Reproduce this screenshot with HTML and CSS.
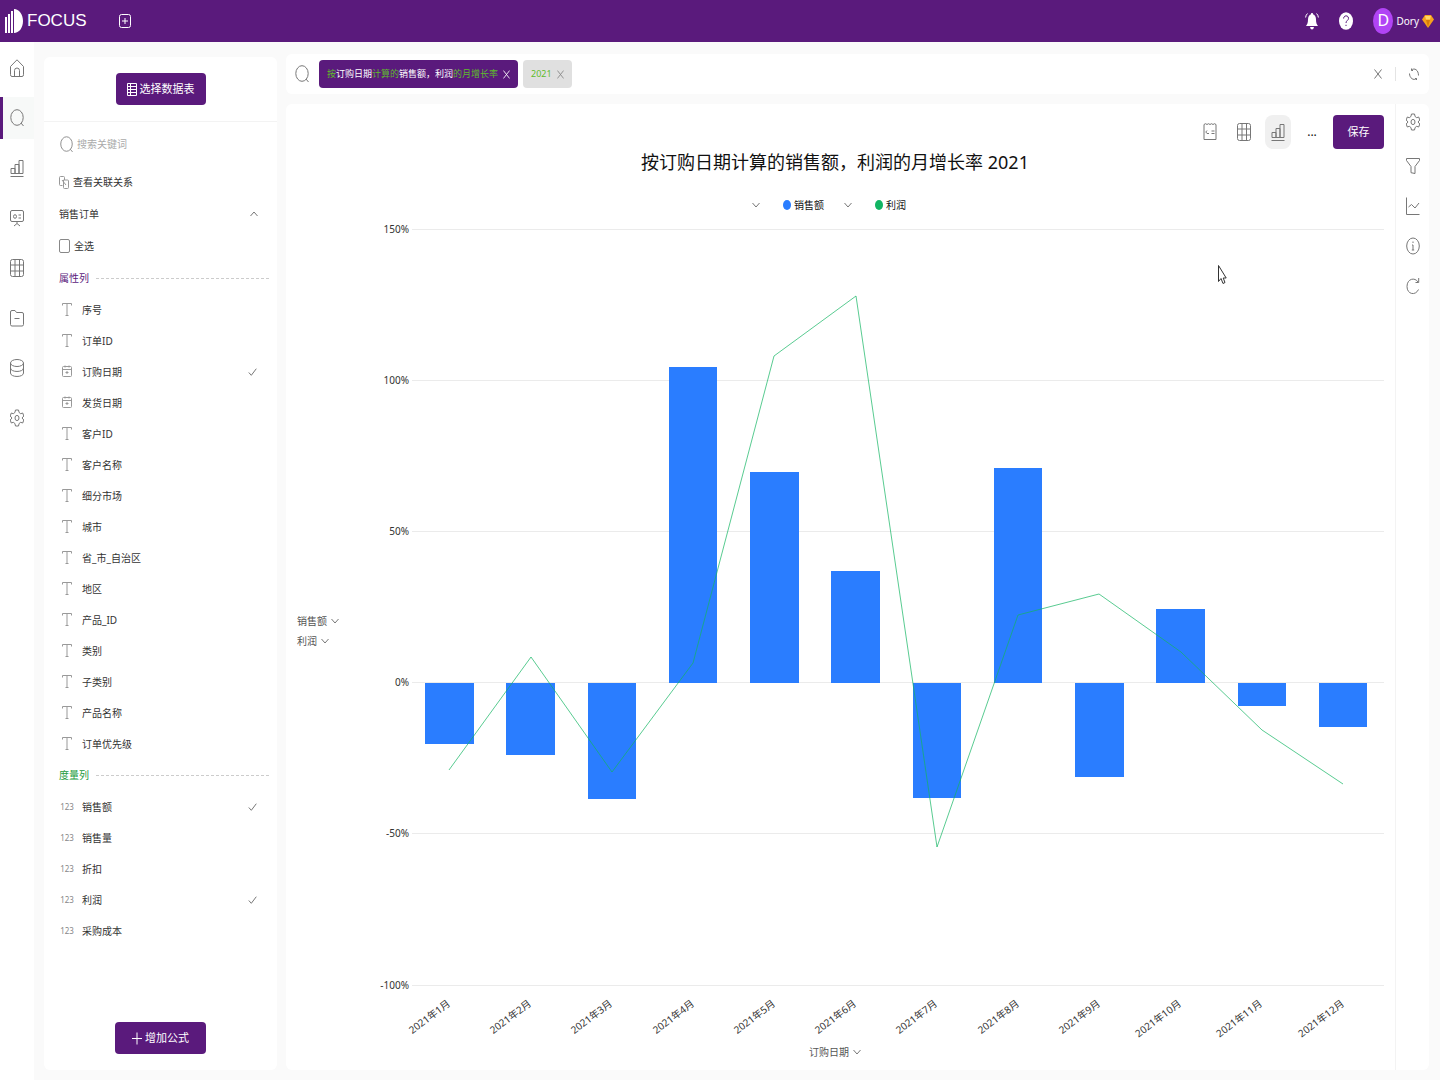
FILE: index.html
```html
<!DOCTYPE html>
<html lang="zh-CN">
<head>
<meta charset="utf-8">
<title>FOCUS</title>
<link rel="stylesheet" href="styles.css">
</head>
<body>
<svg class="sprite" aria-hidden="true">
  <symbol id="i-search" viewBox="0 0 14 18"><ellipse cx="7" cy="8.500" rx="6.200" ry="7.800"/><path d="M11 14l2.500 3"/></symbol>
  <symbol id="i-home" viewBox="0 0 14 18"><path d="M.5 7.500L7 .8l6.500 6.700v8.200q0 1.800-1.500 1.800H2q-1.500 0-1.500-1.800zM4.500 17.500v-6q0-2.500 2.500-2.500t2.500 2.500v6"/></symbol>
  <symbol id="i-bars" viewBox="0 0 14 18"><path d="M.5 17.500h13M1 14.500V9.500h4v5M5 14.500V5.500h4v9M9 14.500v-13h4v13M1 14.500h12"/></symbol>
  <symbol id="i-board" viewBox="0 0 14 18"><path d="M2 1.500h10q1.500 0 1.500 1.500v8q0 1.500-1.500 1.500H2Q.5 12.500.5 11V3Q.5 1.500 2 1.500zM7 12.500v2M4 17l3-2.500L10 17M8.500 6H11M8.500 9H11"/><ellipse cx="5" cy="7.500" rx="1.500" ry="1.800"/></symbol>
  <symbol id="i-grid" viewBox="0 0 14 18"><rect x=".5" y=".5" width="13" height="17" rx="2"/><path d="M.5 6h13M.5 12h13M5 .5v17M9.500.5v17"/></symbol>
  <symbol id="i-folder" viewBox="0 0 14 18"><path d="M.5 3Q.5 1.500 2 1.500h3L6.500 3.500H12q1.500 0 1.500 1.500v10.500q0 1.500-1.500 1.500H2Q.5 17 .5 15.500zM4.500 9.500h5"/></symbol>
  <symbol id="i-db" viewBox="0 0 14 18"><ellipse cx="7" cy="4" rx="6.500" ry="3.500"/><path d="M.5 4v10c0 4.600 13 4.600 13 0V4M.5 9c0 4.600 13 4.600 13 0"/></symbol>
  <symbol id="i-gear" viewBox="0 0 14 18"><path d="M5.500 1h3l.6 2.500 1.600 1.200 2-.7 1.100 3L12 9l1.800 2-1.100 3-2-.7-1.600 1.200L8.500 17h-3l-.6-2.500-1.600-1.200-2 .7-1.100-3L2 9 .2 7l1.100-3 2 .7 1.600-1.200z"/><ellipse cx="7" cy="9" rx="2" ry="2.600"/></symbol>
  <symbol id="i-text" viewBox="0 0 10 13"><path d="M.5 2.500V.5h9v2M5 .5v12M3.500 12.500h3"/></symbol>
  <symbol id="i-date" viewBox="0 0 10 13"><rect x=".5" y="1.500" width="9" height="10" rx="1"/><path d="M.5 4.500h9M3 .5v2M7 .5v2M3.500 7.500h3M5 6v3"/></symbol>
  <symbol id="i-link" viewBox="0 0 10 13"><path d="M3.500 9.500h-2q-1 0-1-1v-7q0-1 1-1h3q1 0 1 1V4M4.500 4H8.500q1 0 1 1v6.500q0 1-1 1h-3q-1 0-1-1zM3 4l4 5"/></symbol>
  <symbol id="i-up" viewBox="0 0 8 6"><path d="M.5 5L4 1l3.500 4"/></symbol>
  <symbol id="i-down" viewBox="0 0 8 6"><path d="M.5 1L4 5l3.500-4"/></symbol>
  <symbol id="i-check" viewBox="0 0 9 8"><path d="M.8 4.500l2.500 2.800L8.300.7"/></symbol>
  <symbol id="i-x" viewBox="0 0 8 10"><path d="M.5.5l7 9M7.500.5l-7 9"/></symbol>
  <symbol id="i-refresh" viewBox="0 0 10 13"><path d="M9.500 7.500C9.500 2 5.500-.5 2.500 2M.5 5.500c0 4.500 4 7.500 7 5M2.500.5V2.500H4M7.500 12v-1.500H6"/></symbol>
  <symbol id="i-filter" viewBox="0 0 14 18"><path d="M.5 1.500h13v2L9 9.500v7l-4-.8V9.500L.5 3.500z"/></symbol>
  <symbol id="i-trend" viewBox="0 0 14 18"><path d="M.5.5v17h13M2.500 10l3-2.500L9 11l4-5"/></symbol>
  <symbol id="i-info" viewBox="0 0 14 18"><ellipse cx="7" cy="9" rx="6.300" ry="8"/><path d="M7 8v5M6 8h1M5.800 13h2.400M7 4.500v1.500"/></symbol>
  <symbol id="i-redo" viewBox="0 0 14 18"><path d="M12.500 12.500C9.500 19 1 17.500 1 9.500 1 1.500 9 0 12 5M12.700 1v4.500H9.500"/></symbol>
  <symbol id="i-summary" viewBox="0 0 14 18"><path d="M1 1.500l1.500-.8L4 1.500l1.500-.8L7 1.500l1.500-.8 1.500.8 1.500-.8 1.500.8v15H1zM4 7.500L2.800 9 4 10.500h2M8.500 8h3M8.500 10.500h3"/></symbol>
</svg>

<header class="topbar">
  <a class="brand" href="#">
    <svg width="18" height="26" viewBox="0 0 18 26" aria-hidden="true"><path fill="#fff" d="M0 9h2v16H0zM3 6h2v19H3zM6 3h2v22H6zM9 1c5 0 9 5 9 12s-4 12-9 12z"/></svg>
    <span>FOCUS</span>
  </a>
  <button class="icon-btn new-tab" aria-label="新建"><svg width="12" height="14" viewBox="0 0 12 14"><rect x=".5" y=".5" width="11" height="13" rx="2"/><path d="M6 4v6M3 7h6"/></svg></button>
  <div class="account">
    <button class="icon-btn" aria-label="通知"><svg width="14" height="18" viewBox="0 0 14 18"><path fill="#fff" stroke="none" d="M7 1c.8 0 1 .6 1 1.200 2 .6 3 2.800 3 5.300 0 3.500.8 5 2 6.500H1c1.200-1.500 2-3 2-6.500 0-2.500 1-4.700 3-5.300C6 1.600 6.200 1 7 1zM5 15h4q-.5 2.500-2 2.500T5 15z"/><path d="M2.500 1.500Q.8 3 .6 5.500M11.500 1.500q1.700 1.500 1.900 4"/></svg></button>
    <button class="icon-btn" aria-label="帮助"><svg width="14" height="18" viewBox="0 0 14 18"><ellipse cx="7" cy="9" rx="7" ry="8.800" fill="#fff" stroke="none"/><path class="mark" d="M4.600 6.500C4.600 3 9.500 3 9.500 6.300 9.500 8.500 7 8.500 7 11M7 12.800v1.200"/></svg></button>
    <button class="user"><span class="avatar">D</span><span>Dory</span><svg width="12" height="13" viewBox="0 0 12 13" aria-hidden="true"><path fill="#f6a21c" d="M3 0h6l3 4.500L6 13 0 4.500z"/><path fill="#ffd566" d="M3 1h6L8 4.500H4z"/><path fill="#d97b0a" d="M4 5h4L6 12z"/></svg></button>
  </div>
</header>

<div class="shell">
  <nav class="rail">
    <a href="#" aria-label="首页"><svg class="ic"><use href="#i-home"/></svg></a>
    <a href="#" class="active" aria-label="搜索"><svg class="ic"><use href="#i-search"/></svg></a>
    <a href="#" aria-label="图表"><svg class="ic"><use href="#i-bars"/></svg></a>
    <a href="#" aria-label="看板"><svg class="ic"><use href="#i-board"/></svg></a>
    <a href="#" aria-label="数据表"><svg class="ic"><use href="#i-grid"/></svg></a>
    <a href="#" aria-label="资源"><svg class="ic"><use href="#i-folder"/></svg></a>
    <a href="#" aria-label="数据源"><svg class="ic"><use href="#i-db"/></svg></a>
    <a href="#" aria-label="设置"><svg class="ic"><use href="#i-gear"/></svg></a>
  </nav>

  <aside class="fields">
    <div class="fields-head">
      <button class="primary"><svg width="10" height="13" viewBox="0 0 10 13"><path d="M.5.5h9v12h-9zM.5 3.500h9M.5 6.500h9M.5 9.500h9M3.500.5v12"/></svg>选择数据表</button>
    </div>
    <label class="find"><svg width="13" height="17"><use href="#i-search"/></svg><input type="text" placeholder="搜索关键词"></label>
    <a class="row link" href="#"><svg class="sm"><use href="#i-link"/></svg>查看关联关系</a>
    <button class="row group">销售订单<svg width="8" height="6"><use href="#i-up"/></svg></button>
    <label class="row all"><input type="checkbox">全选</label>

    <h2 class="row section attr">属性列</h2>
    <ul>
      <li><svg class="sm"><use href="#i-text"/></svg>序号</li>
      <li><svg class="sm"><use href="#i-text"/></svg>订单ID</li>
      <li><svg class="sm"><use href="#i-date"/></svg>订购日期<svg class="tick"><use href="#i-check"/></svg></li>
      <li><svg class="sm"><use href="#i-date"/></svg>发货日期</li>
      <li><svg class="sm"><use href="#i-text"/></svg>客户ID</li>
      <li><svg class="sm"><use href="#i-text"/></svg>客户名称</li>
      <li><svg class="sm"><use href="#i-text"/></svg>细分市场</li>
      <li><svg class="sm"><use href="#i-text"/></svg>城市</li>
      <li><svg class="sm"><use href="#i-text"/></svg>省_市_自治区</li>
      <li><svg class="sm"><use href="#i-text"/></svg>地区</li>
      <li><svg class="sm"><use href="#i-text"/></svg>产品_ID</li>
      <li><svg class="sm"><use href="#i-text"/></svg>类别</li>
      <li><svg class="sm"><use href="#i-text"/></svg>子类别</li>
      <li><svg class="sm"><use href="#i-text"/></svg>产品名称</li>
      <li><svg class="sm"><use href="#i-text"/></svg>订单优先级</li>
    </ul>
    <h2 class="row section measure">度量列</h2>
    <ul>
      <li><span class="num">123</span>销售额<svg class="tick"><use href="#i-check"/></svg></li>
      <li><span class="num">123</span>销售量</li>
      <li><span class="num">123</span>折扣</li>
      <li><span class="num">123</span>利润<svg class="tick"><use href="#i-check"/></svg></li>
      <li><span class="num">123</span>采购成本</li>
    </ul>
    <div class="fields-foot">
      <button class="primary"><svg width="10" height="13" viewBox="0 0 10 13"><path d="M5 .5v12M0 6.500h10"/></svg>增加公式</button>
    </div>
  </aside>

  <main class="work">
    <div class="query">
      <svg class="ic"><use href="#i-search"/></svg>
      <button class="chip on"><span><em>按</em>订购日期<em>计算的</em>销售额，利润<em>的月增长率</em></span><svg width="7" height="9"><use href="#i-x"/></svg></button>
      <button class="chip"><span>2021</span><svg width="7" height="9"><use href="#i-x"/></svg></button>
      <input type="text" aria-label="搜索内容">
      <button class="icon-btn" aria-label="清空"><svg width="8" height="10"><use href="#i-x"/></svg></button>
      <span class="bar"></span>
      <button class="icon-btn" aria-label="刷新"><svg width="10" height="13"><use href="#i-refresh"/></svg></button>
    </div>

    <section class="result">
      <div class="view">
        <div class="tools">
          <button class="tool" aria-label="摘要"><svg class="ic"><use href="#i-summary"/></svg></button>
          <button class="tool" aria-label="表格"><svg class="ic"><use href="#i-grid"/></svg></button>
          <button class="tool picked" aria-label="图形"><svg class="ic"><use href="#i-bars"/></svg></button>
          <button class="tool">...</button>
          <button class="primary save">保存</button>
        </div>
        <h1>按订购日期计算的销售额，利润的月增长率 2021</h1>
        <div class="legend">
          <span class="key sales"><svg width="8" height="6"><use href="#i-down"/></svg><i></i>销售额</span>
          <span class="key profit"><svg width="8" height="6"><use href="#i-down"/></svg><i></i>利润</span>
        </div>
        <div class="plot">
          <div class="measures">
            <button>销售额<svg width="8" height="6"><use href="#i-down"/></svg></button>
            <button>利润<svg width="8" height="6"><use href="#i-down"/></svg></button>
          </div>
          <svg class="chart" viewBox="346 214 1038 829" role="img" aria-label="月增长率">
            <path class="gridlines" d="M412 229.500h972M412 380.500h972M412 531.500h972M412 682.500h972M412 833.500h972M412 985.500h972"/>
            <g class="ylabels">
              <text x="409" y="233">150%</text><text x="409" y="384">100%</text><text x="409" y="535">50%</text>
              <text x="409" y="686">0%</text><text x="409" y="837">-50%</text><text x="409" y="989">-100%</text>
            </g>
            <g class="columns">
              <rect x="425" y="683" width="49" height="61"/><rect x="506" y="683" width="49" height="72"/>
              <rect x="588" y="683" width="48" height="116"/><rect x="669" y="367" width="48" height="316"/>
              <rect x="750" y="472" width="49" height="211"/><rect x="831" y="571" width="49" height="112"/>
              <rect x="913" y="683" width="48" height="115"/><rect x="994" y="468" width="48" height="215"/>
              <rect x="1075" y="683" width="49" height="94"/><rect x="1156" y="609" width="49" height="74"/>
              <rect x="1238" y="683" width="48" height="23"/><rect x="1319" y="683" width="48" height="44"/>
            </g>
            <polyline class="line" points="449,770 531,657 612,772 693,663 774,356 856,296 937,847 1018,615 1099,594 1181,652 1262,730 1343,784"/>
            <g class="xlabels">
              <text transform="translate(451 1005) rotate(-37)">2021年1月</text>
              <text transform="translate(532 1005) rotate(-37)">2021年2月</text>
              <text transform="translate(613 1005) rotate(-37)">2021年3月</text>
              <text transform="translate(695 1005) rotate(-37)">2021年4月</text>
              <text transform="translate(776 1005) rotate(-37)">2021年5月</text>
              <text transform="translate(857 1005) rotate(-37)">2021年6月</text>
              <text transform="translate(938 1005) rotate(-37)">2021年7月</text>
              <text transform="translate(1020 1005) rotate(-37)">2021年8月</text>
              <text transform="translate(1101 1005) rotate(-37)">2021年9月</text>
              <text transform="translate(1182 1005) rotate(-37)">2021年10月</text>
              <text transform="translate(1263 1005) rotate(-37)">2021年11月</text>
              <text transform="translate(1345 1005) rotate(-37)">2021年12月</text>
            </g>
            <path class="pointer" d="M1218.500 265.500v16l2.500-3 2 5 2-1-1.800-4.500h3z"/>
          </svg>
        </div>
        <button class="dimension">订购日期<svg width="8" height="6"><use href="#i-down"/></svg></button>
      </div>
      <div class="side">
        <button class="icon-btn" aria-label="配置"><svg class="ic"><use href="#i-gear"/></svg></button>
        <button class="icon-btn" aria-label="筛选"><svg class="ic"><use href="#i-filter"/></svg></button>
        <button class="icon-btn" aria-label="趋势"><svg class="ic"><use href="#i-trend"/></svg></button>
        <button class="icon-btn" aria-label="信息"><svg class="ic"><use href="#i-info"/></svg></button>
        <button class="icon-btn" aria-label="重新加载"><svg class="ic"><use href="#i-redo"/></svg></button>
      </div>
    </section>
  </main>
</div>
</body>
</html>
```
FILE: styles.css
```css
* { box-sizing: border-box; }

:root {
  --brand: #5a1a7c;
  --ink: #333;
  --green: #5fbb2c;
}

body {
  margin: 0;
  min-height: 100vh;
  display: flex;
  flex-direction: column;
  background: #fafafa;
  color: var(--ink);
  font: 10px/16px "Noto Sans", "Noto Sans CJK SC", sans-serif;
}

button, input { font: inherit; color: inherit; border: 0; padding: 0; margin: 0; background: none; }
button { cursor: pointer; }
a { color: inherit; text-decoration: none; }
ul { list-style: none; margin: 0; padding: 0; }
h1, h2 { margin: 0; font-weight: 400; }
em, i { font-style: normal; }

svg { display: block; flex: none; fill: none; stroke: #777; stroke-width: 1; }
.sprite { position: absolute; width: 0; height: 0; }
.ic { width: 14px; height: 18px; }
.sm { width: 10px; height: 13px; stroke: #999; }
.icon-btn { display: flex; align-items: center; justify-content: center; }

/* top bar */
.topbar {
  display: flex;
  align-items: center;
  height: 42px;
  padding: 0 6px 0 5px;
  background: var(--brand);
  color: #fff;
}
.topbar svg { stroke: #fff; }
.brand { display: flex; align-items: center; gap: 4px; font: 17px/26px "Liberation Sans", sans-serif; }
.brand svg, .user svg { stroke: none; }
.new-tab { margin-left: 32px; }
.account { display: flex; align-items: center; gap: 20px; margin-left: auto; }
.topbar .mark { stroke: var(--brand); }
.user { display: flex; align-items: center; gap: 3px; }
.avatar { width: 20px; height: 26px; border-radius: 50%; background: #b144f5; font-size: 16px; line-height: 24px; text-align: center; }

/* shell */
.shell { flex: 1; display: flex; }
.rail { width: 34px; padding-top: 5px; display: flex; flex-direction: column; gap: 8px; background: #fff; }
.rail a { height: 42px; display: flex; align-items: center; justify-content: center; border-left: 3px solid transparent; padding-right: 3px; }
.rail .active { border-color: var(--brand); background: #f7f9f8; }

.primary {
  display: flex;
  align-items: center;
  justify-content: center;
  gap: 3px;
  height: 32px;
  padding: 0 11px;
  border-radius: 4px;
  background: var(--brand);
  color: #fff;
  font-size: 11px;
}
.primary svg { stroke: #fff; }

/* field list */
.fields { width: 233px; margin: 15px 0 10px 10px; display: flex; flex-direction: column; background: #fff; border-radius: 6px; }
.fields-head { display: flex; justify-content: center; padding: 16px 0; border-bottom: 1px solid #f3f3f3; }
.find { display: flex; align-items: center; gap: 4px; height: 44px; padding: 0 16px; }
.find svg { stroke: #888; }
.find input { flex: 1; min-width: 0; outline: 0; }
.find input::placeholder { color: #aaa; opacity: 1; }
.row { display: flex; align-items: center; height: 32px; padding: 0 8px 0 15px; gap: 4px; font-size: 10px; line-height: 16px; }
.group { justify-content: space-between; padding-right: 19px; }
.all input { appearance: none; width: 11px; height: 14px; border: 1px solid #888; border-radius: 2px; }
.section { gap: 7px; }
.section::after { content: ""; flex: 1; border-top: 1px dashed #ccc; }
.attr { color: var(--brand); }
.measure { color: #219a3c; }
.fields li { display: flex; align-items: center; gap: 10px; height: 31px; padding: 0 20px 0 18px; }
.num { width: 10px; display: flex; justify-content: center; font-size: 8px; color: #888; }
.tick { width: 9px; height: 8px; margin-left: auto; }
.fields-foot { display: flex; justify-content: center; margin-top: auto; padding-bottom: 16px; }
.fields-foot .primary { padding: 0 17px; }

/* query bar */
.work { flex: 1; min-width: 0; display: flex; flex-direction: column; gap: 10px; padding: 12px 11px 10px 9px; }
.query { display: flex; align-items: center; gap: 5px; height: 40px; padding: 0 10px 0 9px; border-radius: 6px; background: #fff; }
.query > .ic { margin-right: 5px; }
.query input { flex: 1; min-width: 0; outline: 0; }
.chip { display: flex; align-items: center; gap: 5px; height: 28px; padding: 0 8px; border-radius: 4px; background: #e0e0e0; color: var(--green); font-size: 9px; }
.chip svg { stroke: #888; }
.chip.on { background: var(--brand); color: #fff; }
.chip.on em { color: var(--green); }
.chip.on svg { stroke: #fff; }
.bar { width: 1px; height: 14px; margin: 0 8px; background: #e4e4e4; }

/* result */
.result { flex: 1; display: flex; background: #fff; border-radius: 6px; }
.view { flex: 1; min-width: 0; display: flex; flex-direction: column; padding: 11px 11px 8px 0; }
.tools { display: flex; justify-content: flex-end; align-items: center; gap: 8px; }
.tool { width: 26px; height: 34px; display: flex; align-items: center; justify-content: center; border-radius: 8px; font-size: 12px; color: #111; }
.picked { background: #f0f0f0; }
.save { width: 51px; height: 34px; padding: 0; }
h1 { font-size: 18px; line-height: 26px; text-align: center; color: #111; }
.legend { display: flex; justify-content: center; gap: 20px; height: 19px; margin: 20px 12px 0 0; color: #111; }
.key { display: flex; align-items: center; gap: 3px; }
.key svg { margin-right: 20px; }
.key i { width: 8px; height: 10px; border-radius: 50%; }
.sales i { background: #2a7dff; }
.profit i { background: #12b563; }
.plot { display: flex; align-items: center; }
.measures { width: 60px; padding: 4px 0 0 11px; }
.measures button, .dimension { display: flex; align-items: center; gap: 4px; height: 20px; color: #555; }
.dimension { height: 18px; align-self: center; }

.chart { flex: 1; min-width: 0; height: auto; stroke: none; overflow: visible; }
.gridlines { stroke: #ebebeb; }
.columns { fill: #2a7dff; }
.line { stroke: #12b563; stroke-opacity: .7; }
.ylabels, .xlabels { font-size: 10px; fill: #333; text-anchor: end; }
.pointer { fill: #fff; stroke: #333; }

.side { width: 34px; border-left: 1px solid #f3f3f3; padding-top: 9px; display: flex; flex-direction: column; gap: 22px; align-items: center; }
.side button:first-child { margin-bottom: 4px; }
```
